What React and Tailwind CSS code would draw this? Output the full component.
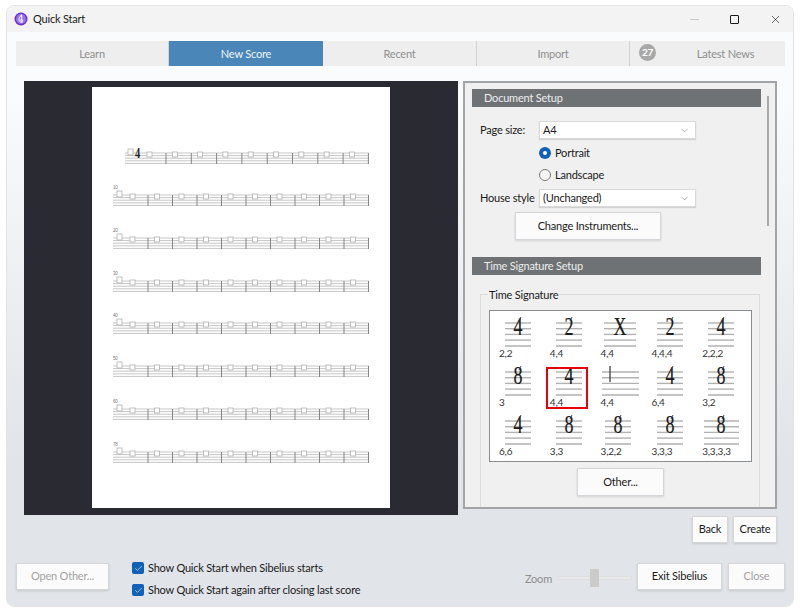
import React from "react";
import { Check, ChevronDown, X } from "lucide-react";

const tabs = [
  { label: "Learn", width: "w-[153px]" },
  { label: "New Score", width: "w-[154px]", active: true },
  { label: "Recent", width: "w-[154px]" },
  { label: "Import", width: "w-[153px]" },
];

const rows = [
  { y: 153, x0: 125, label: "" },
  { y: 195, x0: 113, label: "10" },
  { y: 238, x0: 113, label: "20" },
  { y: 281, x0: 113, label: "30" },
  { y: 323, x0: 113, label: "40" },
  { y: 366, x0: 113, label: "50" },
  { y: 409, x0: 113, label: "60" },
  { y: 452, x0: 113, label: "78" },
];

const signatures = [
  { x0: 8, x1: 34, label: "2,2", glyph: "4", gx: 21, tick: true },
  { x0: 8, x1: 34, label: "4,4", glyph: "2", gx: 21, tick: true },
  { x0: 5, x1: 37, label: "4,4", glyph: "X", gx: 21 },
  { x0: 8, x1: 34, label: "4,4,4", glyph: "2", gx: 21, tick: true },
  { x0: 8, x1: 34, label: "2,2,2", glyph: "4", gx: 21, tick: true },
  { x0: 8, x1: 34, label: "3", glyph: "8", gx: 21, tick: true },
  { x0: 8, x1: 34, label: "4,4", glyph: "4", gx: 21, selected: true },
  { x0: 3, x1: 40, label: "4,4", bar: true, gx: 11 },
  { x0: 8, x1: 34, label: "6,4", glyph: "4", gx: 21, tick: true },
  { x0: 8, x1: 34, label: "3,2", glyph: "8", gx: 21, tick: true },
  { x0: 8, x1: 34, label: "6,6", glyph: "4", gx: 21, tick: true },
  { x0: 8, x1: 34, label: "3,3", glyph: "8", gx: 21, tick: true },
  { x0: 6, x1: 32, label: "3,2,2", glyph: "8", gx: 19, tick: true },
  { x0: 8, x1: 34, label: "3,3,3", glyph: "8", gx: 21, tick: true },
  { x0: 4, x1: 39, label: "3,3,3,3", glyph: "8", gx: 21, tick: true },
];

const ScoreSheet = () => (
  <svg width="298" height="421" viewBox="92 87 298 421" className="block">
    {rows.map((row) => {
      const first = row.x0 === 125;
      return (
        <g key={row.y}>
          {[0, 1, 2, 3, 4].map((l) => (
            <line key={l} x1={row.x0} x2="369" y1={row.y + l * 2.6} y2={row.y + l * 2.6} stroke="#c6c6c6" strokeWidth="1" />
          ))}
          {Array.from({ length: first ? 9 : 10 }).map((_, i) => {
            const left = first ? 166 + i * 25.3 : 148 + i * 24.5;
            return <line key={i} x1={left} x2={left} y1={row.y} y2={row.y + 11} stroke="#858585" strokeWidth="1" />;
          })}
          {Array.from({ length: first ? 9 : 10 }).map((_, i) => {
            const left = first ? 147 + i * 25.3 : 130 + i * 24.5;
            return <rect key={i} x={left} y={row.y - 1} width="5" height="5" fill="#fff" stroke="#b0b0b0" strokeWidth="0.8" />;
          })}
          <rect x={first ? 128 : 117} y={row.y - 4} width="5" height="6" fill="#fff" stroke="#b0b0b0" strokeWidth="0.8" />
          {row.label && (
            <text x={row.x0} y={row.y - 6} fontSize="4.5" fill="#777" fontFamily="Liberation Sans">
              {row.label}
            </text>
          )}
          {first && (
            <text x="0" y="0" fontSize="15" fontWeight="700" fill="#222" fontFamily="Liberation Serif" transform={`translate(135 ${row.y + 5}) scale(0.7 1)`}>
              4
            </text>
          )}
        </g>
      );
    })}
  </svg>
);

const Button = ({ children, disabled, className = "" }) => (
  <button
    className={`flex items-center justify-center bg-[#fbfbfb] border border-[#d4d6d9] shadow-[0_1px_2px_rgba(0,0,0,0.12)] text-[11px] ${disabled ? "text-[#a2a2a2]" : "text-[#1a1a1a]"} ${className}`}
  >
    {children}
  </button>
);

const Select = ({ value }) => (
  <div className="w-[157px] h-[18px] bg-white border border-[#d9d9d9] shadow-[0_1px_1px_rgba(0,0,0,0.12)] flex items-center justify-between pl-[3px] pr-[5px] text-[11px] text-[#1a1a1a]">
    <span>{value}</span>
    <ChevronDown size={11} strokeWidth={1} className="text-[#555]" />
  </div>
);

const Radio = ({ checked, label }) => (
  <div className="flex items-center h-[12px] gap-[4px] text-[11px] text-[#1a1a1a]">
    {checked ? (
      <span className="w-[12px] h-[12px] rounded-full bg-[#0f62b5] flex items-center justify-center">
        <span className="w-[4px] h-[4px] rounded-full bg-white" />
      </span>
    ) : (
      <span className="w-[12px] h-[12px] rounded-full border border-[#7a7a7a] bg-[#f6f6f6]" />
    )}
    <span>{label}</span>
  </div>
);

const SectionHeader = ({ children }) => (
  <div className="h-[18px] w-[289px] bg-[#6f7275] text-[#eceeef] text-[11px] pl-[12px] flex items-center">
    {children}
  </div>
);

const Signature = ({ sig }) => (
  <div className="relative w-[49px] h-[49px]">
    <svg width="49" height="38" viewBox="0 0 49 38" className="block">
      {[0, 1, 2, 3].map((l) => (
        <line key={l} x1={sig.x0} x2={sig.x1} y1={11 + l * 5.7} y2={11 + l * 5.7} stroke="#b2b2b2" strokeWidth="1.4" />
      ))}
      <line x1={sig.x0} x2={sig.x1} y1="34" y2="34" stroke="#6a6a6a" strokeWidth="0.8" />
      {sig.bar && <line x1={sig.gx} x2={sig.gx} y1="5" y2="21" stroke="#333" strokeWidth="1.2" />}
      {sig.glyph && (
        <text
          x="0"
          y="0"
          fontSize="25"
          textAnchor="middle"
          fontFamily="Liberation Serif"
          fill="#1a1a1a"
          stroke="#1a1a1a"
          strokeWidth="0.2"
          transform={`translate(${sig.gx} 23) scale(0.72 1)`}
        >
          {sig.glyph}
        </text>
      )}
      {sig.tick && <path d={`M${sig.gx + 1} 9 L${sig.gx + 3} 5`} stroke="#333" strokeWidth="0.9" fill="none" />}
    </svg>
    <div className="absolute left-[2px] top-[35px] text-[10px] leading-[12px] text-[#333]">{sig.label}</div>
    {sig.selected && (
      <div className="absolute left-[-2px] top-[6px] w-[42px] h-[42px] border-2 border-[#e8000c]" />
    )}
  </div>
);

const CheckRow = ({ label }) => (
  <div className="flex items-center gap-[4px] h-[12px] text-[11px] text-[#1a1a1a]">
    <span className="w-[12px] h-[12px] rounded-[2px] bg-[#0f62b5] flex items-center justify-center">
      <Check size={9} strokeWidth={1.5} className="text-white" />
    </span>
    <span>{label}</span>
  </div>
);

export default function App() {
  return (
    <div className="w-[800px] h-[612px] bg-white pt-[5px] pl-[6px] overflow-hidden font-['Lato',sans-serif] tracking-[-0.2px]">
      <div className="w-[788px] h-[602px] rounded-lg border border-[#e3e3e3] overflow-hidden flex flex-col">
        {/* title bar */}
        <div className="h-[26px] shrink-0 bg-[#f3f3f3] flex items-center pl-[7px] pr-[13px]">
          <svg width="14" height="14" viewBox="0 0 14 14">
            <circle cx="7" cy="7" r="6.5" fill="#6a2fd6" />
            <circle cx="7" cy="7" r="5" fill="#9a72e8" />
            <path d="M7.6 2.6 C6 4.6 5 6 5 7.8 C5 9.4 6.2 10.2 7.2 10 C8.4 9.8 8.8 8.6 8.2 7.8 C7.6 7 6.4 7.4 6.4 8.4 M7.6 2.6 L8 11" stroke="#fff" strokeWidth="1" fill="none" />
          </svg>
          <span className="ml-[5px] text-[11px] text-[#1a1a1a]">Quick Start</span>
          <div className="ml-auto flex items-center">
            <div className="w-[9px] h-px bg-[#c8c8c8] mr-[31px]" />
            <div className="w-[9px] h-[9px] border border-[#1a1a1a] rounded-[1px] mr-[30px]" />
            <X size={13} strokeWidth={1.2} className="text-[#1a1a1a] -mr-[2px]" />
          </div>
        </div>

        <div className="flex-1 bg-linear-to-b from-[#fafbfd] from-10% to-[#e1e4e8] to-75% flex flex-col">
          {/* tabs */}
          <div className="mt-[9px] ml-[9px] w-[769px] h-[25px] flex bg-[#eeeeee] text-[11px] shrink-0">
            {tabs.map((tab) => (
              <div
                key={tab.label}
                className={`${tab.width} flex items-center justify-center pt-[2px] ${tab.active ? "bg-[#4a87b8] text-[#eef5fa]" : "text-[#8e8e8e] border-r border-[#d2d2d2]"}`}
              >
                {tab.label}
              </div>
            ))}
            <div className="flex-1 relative flex items-center justify-center pt-[2px] pl-[36px] text-[#8e8e8e]">
              Latest News
              <span className="absolute left-[9px] top-[3px] w-[17px] h-[17px] rounded-full bg-[#a8a8a8] text-white text-[10px] font-bold flex items-center justify-center">
                27
              </span>
            </div>
          </div>

          {/* preview and setup */}
          <div className="mt-[15px] ml-[17px] flex gap-[5px] shrink-0">
            <div className="w-[434px] h-[434px] bg-[#2a2b32] flex justify-center pt-[6px]">
              <div className="w-[298px] h-[421px] bg-white">
                <ScoreSheet />
              </div>
            </div>
            <div className="relative w-[314px] h-[428px] bg-[#f0f0f0] border-2 border-[#a2a5a8] pl-[7px] pt-[6px] overflow-hidden">
              <SectionHeader>Document Setup</SectionHeader>
              <div className="absolute right-[6px] top-[13px] w-[2px] h-[130px] bg-[#a8a8a8]" />

              <div className="mt-[14px] flex flex-col">
                <div className="flex items-center">
                  <span className="w-[67px] pl-[8px] text-[11px] text-[#1a1a1a] whitespace-nowrap">Page size:</span>
                  <Select value="A4" />
                </div>
                <div className="ml-[67px] mt-[8px] flex flex-col gap-[10px]">
                  <Radio checked label="Portrait" />
                  <Radio label="Landscape" />
                </div>
                <div className="flex items-center mt-[8px]">
                  <span className="w-[67px] pl-[8px] text-[11px] text-[#1a1a1a] whitespace-nowrap">House style</span>
                  <Select value="(Unchanged)" />
                </div>
                <Button className="ml-[43px] mt-[5px] w-[146px] h-[28px]">Change Instruments...</Button>
              </div>

              <div className="mt-[17px]">
                <SectionHeader>Time Signature Setup</SectionHeader>
              </div>

              <div className="relative mt-[19px] ml-[8px] w-[280px] h-[220px] border border-[#dcdcdc] pt-[15px]">
                <span className="absolute left-[7px] top-[-7px] bg-[#f0f0f0] px-px text-[11px] leading-[14px] text-[#1a1a1a]">
                  Time Signature
                </span>
                <div className="ml-[8px] w-[263px] h-[152px] bg-white border border-[#8a8d90] pl-[7px] pt-px grid grid-cols-5 content-start">
                  {signatures.map((sig, i) => (
                    <Signature key={i} sig={sig} />
                  ))}
                </div>
                <Button className="ml-[96px] mt-[6px] w-[87px] h-[28px]">Other...</Button>
              </div>
            </div>
          </div>

          {/* back / create */}
          <div className="mt-[1px] ml-[685px] w-[85px] flex gap-[5px] h-[27px] shrink-0 text-[11px]">
            <Button className="w-[36px] h-[27px] shrink-0">Back</Button>
            <Button className="w-[44px] h-[27px] shrink-0">Create</Button>
          </div>

          {/* footer */}
          <div className="mt-[20px] ml-[9px] w-[769px] flex items-start">
            <Button disabled className="w-[93px] h-[27px]">Open Other...</Button>
            <div className="ml-[23px] flex flex-col gap-[10px] -mt-px">
              <CheckRow label="Show Quick Start when Sibelius starts" />
              <CheckRow label="Show Quick Start again after closing last score" />
            </div>
            <div className="ml-auto flex items-center h-[27px]">
              <span className="text-[11px] text-[#8e8e8e] mt-[5px]">Zoom</span>
              <div className="relative ml-[6px] mt-[2px] w-[74px] h-[4px] bg-[#e9eaec] border border-[#dcdee0] mr-[5px]">
                <div className="absolute left-[31px] top-[-8px] w-[9px] h-[18px] bg-[#cbcbcb]" />
              </div>
              <Button className="w-[85px] h-[27px]">Exit Sibelius</Button>
              <Button disabled className="ml-[6px] w-[57px] h-[27px]">Close</Button>
            </div>
          </div>
        </div>
      </div>
    </div>
  );
}
